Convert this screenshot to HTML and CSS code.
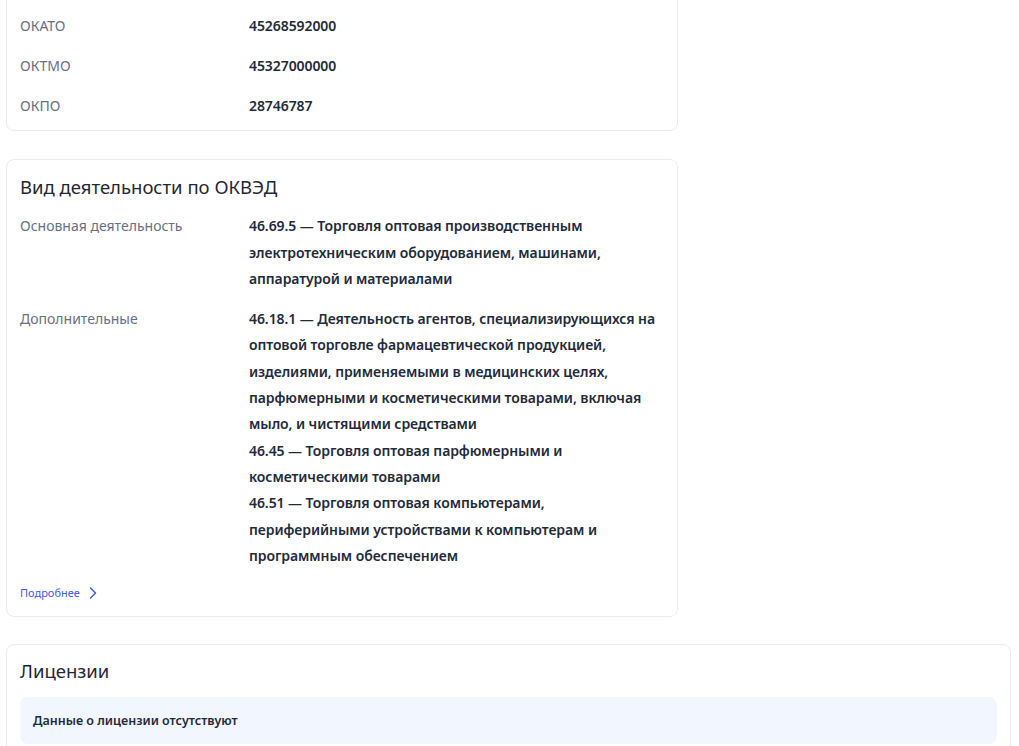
FILE: index.html
```html
<!DOCTYPE html>
<html lang="ru">
<head>
<meta charset="utf-8">
<title>Реквизиты</title>
<link rel="stylesheet" href="styles.css">
</head>
<body>
<div class="page">
  <section class="card card-narrow card-first">
    <div class="rows">
      <div class="row"><div class="label">ОКАТО</div><div class="value">45268592000</div></div>
      <div class="row"><div class="label">ОКТМО</div><div class="value">45327000000</div></div>
      <div class="row"><div class="label">ОКПО</div><div class="value">28746787</div></div>
    </div>
  </section>

  <section class="card card-narrow">
    <h2 class="card-title">Вид деятельности по ОКВЭД</h2>
    <div class="rows">
      <div class="row">
        <div class="label">Основная деятельность</div>
        <div class="value">46.69.5 — Торговля оптовая производственным электротехническим оборудованием, машинами, аппаратурой и материалами</div>
      </div>
      <div class="row">
        <div class="label">Дополнительные</div>
        <div class="value">
          <div>46.18.1 — Деятельность агентов, специализирующихся на оптовой торговле фармацевтической продукцией, изделиями, применяемыми в медицинских целях, парфюмерными и косметическими товарами, включая мыло, и чистящими средствами</div>
          <div>46.45 — Торговля оптовая парфюмерными и косметическими товарами</div>
          <div>46.51 — Торговля оптовая компьютерами, периферийными устройствами к компьютерам и программным обеспечением</div>
        </div>
      </div>
    </div>
    <a class="more" href="#">Подробнее
      <svg class="chev" width="8" height="12" viewBox="0 0 8 12" aria-hidden="true"><path d="M1.5 1 L6.5 6 L1.5 11" fill="none" stroke="currentColor" stroke-width="1.5" stroke-linecap="round" stroke-linejoin="round"/></svg>
    </a>
  </section>

  <section class="card card-wide">
    <h2 class="card-title">Лицензии</h2>
    <div class="empty">Данные о лицензии отсутствуют</div>
  </section>
</div>
</body>
</html>
```

FILE: styles.css
```css
* { box-sizing: border-box; }
html, body { margin: 0; padding: 0; background: #ffffff; }
body {
  font-family: "Noto Sans", "Open Sans", "DejaVu Sans", sans-serif;
  color: #1f2636;
  overflow: hidden;
}
.page {
  padding: 0 0 0 6px;
  display: flex;
  flex-direction: column;
  gap: 28px;
}
.card {
  background: #fff;
  border: 1px solid #ebebeb;
  border-radius: 8px;
  padding: 13px 13px 14px 13px;
}
.card-narrow { width: 672px; }
.card-wide { width: 1005px; padding-top: 12px; margin-top: -1px; }
.card-first { margin-top: -40px; padding-top: 52px; padding-bottom: 11px; }
.card-title {
  margin: 0 0 12px 0;
  font-size: 18.5px;
  font-weight: 400;
  line-height: 28px;
  color: #1f2636;
}
.rows { display: flex; flex-direction: column; gap: 13.67px; }
.row {
  display: grid;
  grid-template-columns: 229px 1fr;
  font-size: 14px;
  line-height: 26.33px;
}
.label { color: #687083; }
.value { font-weight: 600; color: #222a3a; letter-spacing: -0.08px; }
.more {
  display: inline-flex;
  align-items: center;
  gap: 9px;
  margin-top: 16px;
  font-size: 11px;
  line-height: 16px;
  color: #3d5ce8;
  text-decoration: none;
}
.chev { color: #3d5ce8; }
.empty {
  background: #f2f6fe;
  border-radius: 8px;
  height: 47px;
  display: flex;
  align-items: center;
  padding: 0 13px;
  font-size: 12.5px;
  font-weight: 600;
  color: #222a3a;
}
```
